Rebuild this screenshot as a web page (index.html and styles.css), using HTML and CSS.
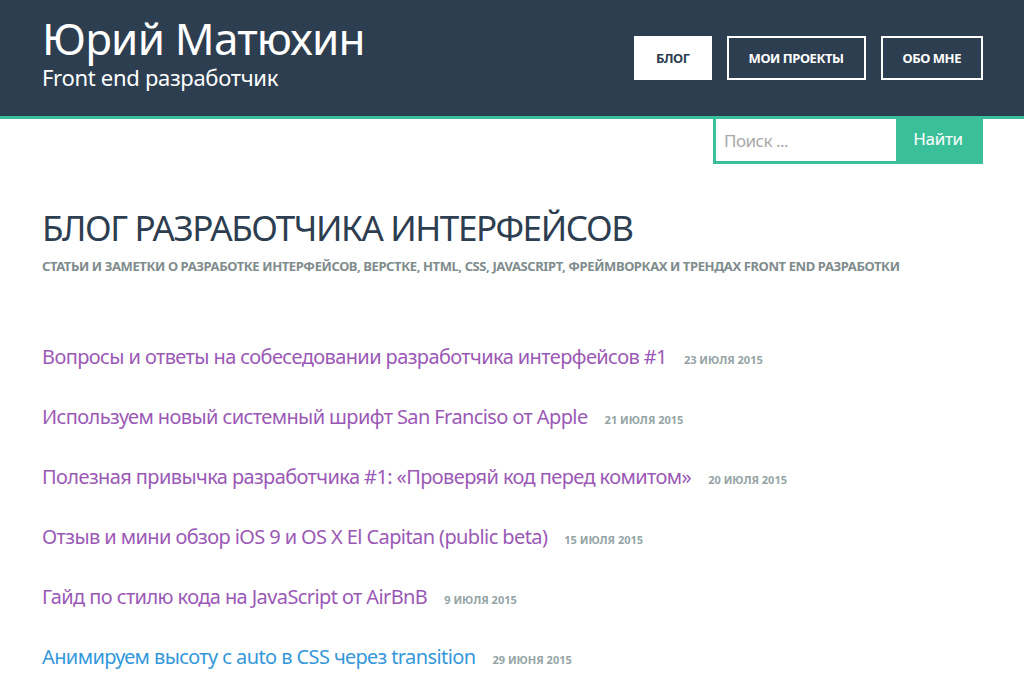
FILE: index.html
```html
<!DOCTYPE html>
<html lang="ru">
<head>
<meta charset="utf-8">
<title>Юрий Матюхин</title>
<link rel="stylesheet" href="styles.css">
</head>
<body>
<header class="site-header">
  <div class="container header-inner">
    <div class="brand">
      <div class="brand-name">Юрий Матюхин</div>
      <div class="brand-sub">Front end разработчик</div>
    </div>
    <nav class="nav">
      <a class="nav-btn active" href="#">Блог</a>
      <a class="nav-btn" href="#">Мои проекты</a>
      <a class="nav-btn" href="#">Обо мне</a>
    </nav>
  </div>
</header>
<div class="container search-row">
  <form class="search">
    <input class="search-input" type="text" placeholder="Поиск ...">
    <button class="search-btn" type="button">Найти</button>
  </form>
</div>
<main class="container">
  <h1 class="page-title">Блог разработчика интерфейсов</h1>
  <p class="page-sub">Статьи и заметки о разработке интерфейсов, верстке, HTML, CSS, JavaScript, фреймворках и трендах front end разработки</p>
  <ul class="posts">
    <li class="post"><a href="#">Вопросы и ответы на собеседовании разработчика интерфейсов #1</a><span class="date">23 июля 2015</span></li>
    <li class="post"><a href="#">Используем новый системный шрифт San Franciso от Apple</a><span class="date">21 июля 2015</span></li>
    <li class="post"><a href="#">Полезная привычка разработчика #1: «Проверяй код перед комитом»</a><span class="date">20 июля 2015</span></li>
    <li class="post"><a href="#">Отзыв и мини обзор iOS 9 и OS X El Capitan (public beta)</a><span class="date">15 июля 2015</span></li>
    <li class="post"><a href="#">Гайд по стилю кода на JavaScript от AirBnB</a><span class="date">9 июля 2015</span></li>
    <li class="post"><a class="hover" href="#">Анимируем высоту с auto в CSS через transition</a><span class="date">29 июня 2015</span></li>
  </ul>
</main>
</body>
</html>
```
FILE: styles.css
```css
* { box-sizing: border-box; }
html, body { margin: 0; padding: 0; }
body {
  font-family: "Noto Sans", "Open Sans", sans-serif;
  background: #fff;
  color: #2d3e50;
  overflow: hidden;
}
.container {
  width: 941px;
  margin-left: calc(50% - 470px);
}
.site-header {
  background: #2d3e50;
  border-bottom: 3px solid #3bbf9a;
  height: 119px;
}
.header-inner {
  display: flex;
  justify-content: space-between;
  align-items: flex-start;
}
.brand { padding-top: 15px; }
.brand-name {
  color: #fff;
  font-size: 44px;
  line-height: 46px;
  letter-spacing: -0.8px;
}
.brand-sub {
  margin-top: 3px;
  color: #fff;
  font-size: 22px;
  line-height: 26px;
  letter-spacing: -0.3px;
}
.nav {
  display: flex;
  gap: 15px;
  padding-top: 36px;
}
.nav-btn {
  display: flex;
  align-items: center;
  justify-content: center;
  height: 44px;
  padding: 0 20px;
  border: 2px solid #fff;
  color: #fff;
  font-size: 13px;
  font-weight: 700;
  text-transform: uppercase;
  text-decoration: none;
  letter-spacing: -0.45px;
}
.nav-btn.active {
  background: #fff;
  color: #2d3e50;
}
.search-row {
  display: flex;
  justify-content: flex-end;
}
.search {
  display: flex;
  width: 270px;
  height: 45px;
  border: 3px solid #3bbf9a;
  border-top: 0;
  margin: 0;
}
.search-input {
  flex: 1;
  min-width: 0;
  border: 0;
  outline: 0;
  padding: 0 0 0 8px;
  font-family: inherit;
  font-size: 17px;
  color: #555;
  letter-spacing: -0.5px;
}
.search-input::placeholder { color: #a9a9a9; }
.search-btn {
  width: 84px;
  border: 0;
  background: #3bbf9a;
  color: #fff;
  font-family: inherit;
  font-size: 17px;
  padding: 0 0 3px;
  letter-spacing: -0.3px;
}
.page-title {
  margin: 42px 0 0;
  font-size: 35px;
  line-height: 44px;
  font-weight: 400;
  text-transform: uppercase;
  letter-spacing: -1.4px;
  color: #2d3e50;
}
.page-sub {
  margin: 7px 0 0;
  font-size: 13px;
  line-height: 18px;
  font-weight: 700;
  text-transform: uppercase;
  color: #7f8c8d;
  letter-spacing: -0.4px;
}
.posts {
  list-style: none;
  margin: 70px 0 0;
  padding: 0;
}
.post {
  height: 60px;
  line-height: 24px;
}
.post a {
  color: #9b59b6;
  text-decoration: none;
  font-size: 20px;
  letter-spacing: -0.6px;
}
.post a.hover { color: #3498db; }
.date {
  margin-left: 17px;
  font-size: 11px;
  font-weight: 700;
  text-transform: uppercase;
  color: #95a5a6;
  letter-spacing: 0;
}
```
